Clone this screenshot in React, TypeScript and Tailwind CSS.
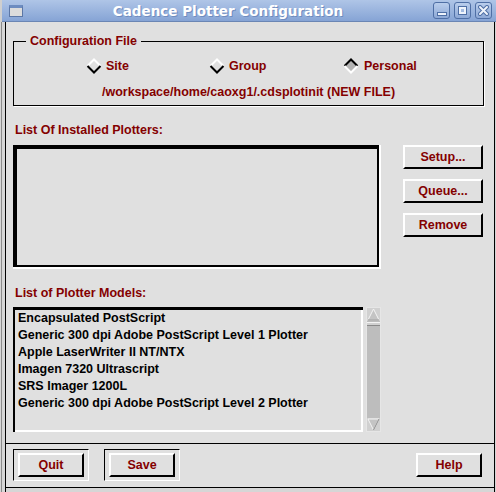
import React from 'react'

const label = "font-['Liberation_Sans',Arial,sans-serif] font-bold text-[12.5px] leading-[14px] text-[#840000]"

function Diamond({ on }: { on?: boolean }) {
  const top = on ? '#000' : '#fff'
  const bot = on ? '#fff' : '#000'
  return (
    <svg width="16" height="16" viewBox="0 0 16 16" className="shrink-0">
      <polygon points="8,1 15,8 8,15 1,8" fill={on ? '#b4b4b4' : '#e0e0e0'} />
      <polyline points="1.5,8 8,1.5 14.5,8" fill="none" stroke={top} strokeWidth="2" />
      <polyline points="1.5,8 8,14.5 14.5,8" fill="none" stroke={bot} strokeWidth="2" />
    </svg>
  )
}

function MotifButton({ text, className = '' }: { text: string; className?: string }) {
  return (
    <button
      className={`h-[24px] bg-[#e0e0e0] border-t-2 border-l-2 border-white border-b-2 border-r-2 border-b-black border-r-black flex items-center justify-center ${label} ${className}`}
    >
      {text}
    </button>
  )
}

function DefaultFrame({ children }: { children: React.ReactNode }) {
  return (
    <div className="w-[76px] h-[32px] border border-t-black border-l-black border-b-white border-r-white p-[3px] pl-[4px] flex items-start">
      {children}
    </div>
  )
}

function TitleButton({ children }: { children: React.ReactNode }) {
  return (
    <div className="w-[17px] h-[17px] rounded-[3px] border border-[#4f6fa5] bg-gradient-to-b from-[#b9cdec] to-[#8ea9d6] flex items-center justify-center">
      {children}
    </div>
  )
}

const models = [
  'Encapsulated PostScript',
  'Generic 300 dpi Adobe PostScript Level 1 Plotter',
  'Apple LaserWriter II NT/NTX',
  'Imagen 7320 Ultrascript',
  'SRS Imager 1200L',
  'Generic 300 dpi Adobe PostScript Level 2 Plotter',
]

export default function App() {
  return (
    <div className="w-[496px] h-[492px] bg-[#cfcfcf] flex flex-col overflow-hidden">
      {/* Title bar */}
      <div className="h-[22px] ml-[2px] flex items-center bg-gradient-to-b from-[#afc5e7] to-[#86a4d5] border-b border-[#6b86b4]">
        <div className="ml-[7px] w-[14px] h-[12px] border border-[#5c77a6] bg-[#dcdcdc] border-t-[3px] border-t-[#6d8cc0]" />
        <div className="flex-1 text-center text-white font-['DejaVu_Sans',sans-serif] font-bold text-[13.5px] leading-[22px] [text-shadow:1px_1px_0_#6f8cbf]">
          Cadence Plotter Configuration
        </div>
        <div className="flex gap-[4px] mr-[4px]">
          <TitleButton>
            <div className="w-[8px] h-[2px] bg-[#eef3fb] mt-[7px] border border-[#4f6fa5] box-content" />
          </TitleButton>
          <TitleButton>
            <div className="w-[7px] h-[7px] border-2 border-[#eef3fb] outline outline-1 outline-[#4f6fa5]" />
          </TitleButton>
          <TitleButton>
            <svg width="11" height="11" viewBox="0 0 11 11">
              <path d="M2 2 L9 9 M9 2 L2 9" stroke="#4f6fa5" strokeWidth="4" strokeLinecap="round" />
              <path d="M2 2 L9 9 M9 2 L2 9" stroke="#eef3fb" strokeWidth="2" strokeLinecap="round" />
            </svg>
          </TitleButton>
        </div>
      </div>

      {/* Body */}
      <div className="flex-1 flex">
        <div className="w-[6px] bg-[#d6d6d6] border-r border-black flex">
          <div className="w-[1px] ml-[1px] bg-[#8a8a8a]" />
        </div>

        <div className="w-[488px] bg-[#e0e0e0] flex flex-col">
          {/* Configuration file group */}
          <fieldset className="mt-[12px] ml-[7px] mr-[10px] border border-black shadow-[1px_1px_0_#fff] pb-[6px]">
            <legend className={`${label} ml-[12px] px-[4px]`}>Configuration File</legend>
            <div className="flex items-center mt-[10px] ml-[72px]">
              <div className="w-[123px] flex items-center gap-[4px]">
                <Diamond />
                <span className={label}>Site</span>
              </div>
              <div className="w-[134px] flex items-center gap-[4px]">
                <Diamond />
                <span className={label}>Group</span>
              </div>
              <div className="flex items-center gap-[5px]">
                <Diamond on />
                <span className={label}>Personal</span>
              </div>
            </div>
            <div className={`${label} text-center mt-[11px]`}>
              /workspace/home/caoxg1/.cdsplotinit (NEW FILE)
            </div>
          </fieldset>

          {/* Installed plotters */}
          <div className={`${label} ml-[9px] mt-[17px]`}>List Of Installed Plotters:</div>
          <div className="flex mt-[8px] ml-[7px]">
            <div className="w-[368px] h-[124px] flex border-r-2 border-b-2 border-white">
              <div className="flex-1 border-t-4 border-l-4 border-r-2 border-b-2 border-black" />
            </div>
            <div className="ml-[22px] w-[80px] flex flex-col gap-[10px]">
              <MotifButton text="Setup..." />
              <MotifButton text="Queue..." />
              <MotifButton text="Remove" />
            </div>
          </div>

          {/* Plotter models */}
          <div className={`${label} ml-[9px] mt-[17px]`}>List of Plotter Models:</div>
          <div className="flex mt-[7px] ml-[7px]">
            <div className="w-[350px] h-[125px] border-t-[3px] border-l-2 border-black flex">
              <div className="flex-1 border-r-2 border-b-2 border-white pl-[3px] font-['Liberation_Sans',Arial,sans-serif] font-bold text-[12.5px] leading-[17px] text-black">
                {models.map((m) => (
                  <div key={m}>{m}</div>
                ))}
              </div>
            </div>
            <div className="ml-[3px] w-[15px] h-[125px] bg-[#bdbdbd] border border-[#e6e6e6] flex flex-col">
              <svg width="13" height="13" viewBox="0 0 13 13">
                <rect width="13" height="13" fill="#d0d0d0" />
                <polygon points="6.5,1 12,12 1,12" fill="#c4c4c4" stroke="#f4f4f4" strokeWidth="1" />
                <line x1="1" y1="12" x2="12" y2="12" stroke="#8a8a8a" />
              </svg>
              <div className="h-[4px] mt-[1px] border-t border-b border-t-[#f4f4f4] border-b-[#8a8a8a] bg-[#d0d0d0]" />
              <div className="flex-1" />
              <svg width="13" height="13" viewBox="0 0 13 13">
                <rect width="13" height="13" fill="#d0d0d0" />
                <polygon points="1,1 12,1 6.5,12" fill="#c4c4c4" stroke="#f4f4f4" strokeWidth="1" />
                <line x1="6.5" y1="12" x2="12" y2="1" stroke="#8a8a8a" />
              </svg>
            </div>
          </div>

          <div className="mt-[11px] h-[1px] bg-black" />

          {/* Bottom buttons */}
          <div className="flex items-center mt-[5px] ml-[7px]">
            <DefaultFrame>
              <MotifButton text="Quit" className="w-[66px] h-[23px]" />
            </DefaultFrame>
            <div className="ml-[15px]">
              <DefaultFrame>
                <MotifButton text="Save" className="w-[66px] h-[23px]" />
              </DefaultFrame>
            </div>
            <div className="ml-auto mr-[12px]">
              <MotifButton text="Help" className="w-[66px] h-[23px]" />
            </div>
          </div>

          <div className="mt-[6px] h-[1px] bg-black" />
          <div className="flex-1 bg-[#d6d6d6]" />
        </div>

        <div className="flex-1 bg-[#d6d6d6] border-l border-black" />
      </div>
    </div>
  )
}
